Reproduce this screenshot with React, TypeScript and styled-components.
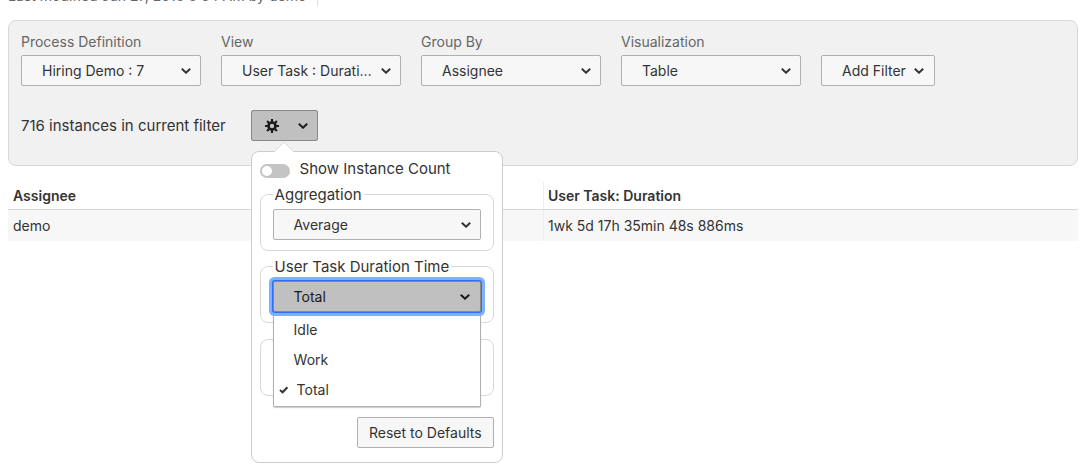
import React from "react";
import styled, { createGlobalStyle, css } from "styled-components";

const Global = createGlobalStyle`
  *, *::before, *::after { box-sizing: border-box; }
  body {
    margin: 0;
    background: #fff;
    color: #333;
    font-family: Inter, "Liberation Sans", sans-serif;
    font-size: 14px;
    line-height: 20px;
  }
  button, select, input { font: inherit; color: inherit; }
`;

const Page = styled.main`
  min-height: 100vh;
  padding: 0 8px;
`;

const ReportMeta = styled.header`
  display: flex;
  align-items: flex-end;
  height: 7px;
  margin-bottom: 13px;
  overflow: hidden;
  color: #666;
`;

const MetaText = styled.span`
  flex: none;
  margin-bottom: 1px;
  padding-right: 11px;
  border-right: 1px solid #ddd;
`;

const ControlPanel = styled.section`
  padding: 11px 12px 24px;
  background: #f1f1f1;
  border: 1px solid #d8d8d8;
  border-radius: 8px;
`;

const Controls = styled.div`
  display: flex;
  flex-wrap: wrap;
  align-items: flex-end;
  gap: 20px;
`;

const Field = styled.div`
  display: flex;
  flex-direction: column;
  gap: 3px;
  width: 180px;
`;

const FieldLabel = styled.label`
  color: #666;
`;

const control = css`
  height: 31px;
  background: #f7f7f7;
  border: 1px solid #b0b0b0;
  border-radius: 2px;
  font-size: 14px;
  line-height: 20px;
`;

const SelectBox = styled.div`
  position: relative;
  display: flex;
`;

const NativeSelect = styled.select`
  ${control}
  appearance: none;
  width: 100%;
  padding: 0 26px 0 20px;
  overflow: hidden;
  white-space: nowrap;
  text-overflow: ellipsis;
`;

const SelectArrow = styled.span`
  position: absolute;
  top: 0;
  right: 10px;
  bottom: 0;
  display: flex;
  align-items: center;
  pointer-events: none;
`;

const DropdownButton = styled.button<{ $active?: boolean }>`
  ${control}
  display: flex;
  align-items: center;
  justify-content: space-between;
  gap: 8px;
  padding: 0 10px 0 20px;
  ${(p) => p.$active && "background: #c0c0c0; border-color: #888; color: #1a1a1a;"}
`;

const SettingsButton = styled(DropdownButton)`
  gap: 19px;
  padding: 0 9px 0 13px;
`;

const OpenDropdownButton = styled(DropdownButton)`
  position: relative;
  z-index: 2;
  width: 100%;
  outline: none;
  box-shadow: 0 0 0 1px #2d70f6, 0 0 0 4px #7fb0ff;
`;

const FilterRow = styled.div`
  display: flex;
  align-items: center;
  gap: 25px;
  margin-top: 24px;
`;

const InstanceCount = styled.span`
  font-size: 15px;
`;

const PopoverAnchor = styled.div`
  position: relative;
`;

const Popover = styled.div`
  position: absolute;
  top: 41px;
  left: 0;
  z-index: 1;
  width: 252px;
  padding: 7px 8px 14px;
  background: #fff;
  border: 1px solid #ccc;
  border-radius: 8px;
  font-size: 15px;
`;

const PopoverTip = styled.svg`
  position: absolute;
  top: -11px;
  left: 21px;
`;

const SwitchLabel = styled.label`
  display: flex;
  align-items: center;
  gap: 10px;
`;

const Switch = styled.input`
  appearance: none;
  display: flex;
  align-items: center;
  width: 30px;
  height: 14px;
  margin: 4px 0 0;
  padding: 0 2px;
  background: #c4c4c4;
  border-radius: 7px;

  &::before {
    content: "";
    width: 10px;
    height: 10px;
    background: #fff;
    border-radius: 50%;
  }
`;

const Group = styled.fieldset`
  min-width: 0;
  margin: 3px 0 0;
  padding: 3px 12px 10px;
  border: 1px solid #d8d8d8;
  border-radius: 8px;
`;

const EmptyGroup = styled(Group)`
  height: 57px;
  margin-top: 16px;
`;

const Legend = styled.legend`
  padding: 2px 2px 0;
  line-height: 22px;
`;

const GroupLabel = styled.label`
  display: block;
`;

const Menu = styled.ul`
  position: absolute;
  top: 34px;
  left: 0;
  right: 0;
  z-index: 1;
  margin: 0;
  padding: 0 0 1px;
  list-style: none;
  background: #fff;
  border: 1px solid #b0b0b0;
  border-top: 0;
  border-radius: 0 0 2px 2px;
  box-shadow: 0 1px 1px #ccc;
  font-size: 14px;
`;

const MenuItem = styled.li<{ $checked?: boolean }>`
  display: flex;
  align-items: center;
  gap: 8px;
  height: 30px;
  padding-left: ${(p) => (p.$checked ? 5 : 20)}px;
`;

const PopoverActions = styled.div`
  display: flex;
  justify-content: flex-end;
  margin-top: 21px;
`;

const PlainButton = styled.button`
  ${control}
  padding: 0 11px;
`;

const ReportTable = styled.table`
  width: 100%;
  margin-top: 16px;
  border-collapse: separate;
  border-spacing: 0;
  table-layout: fixed;
`;

const cell = css`
  text-align: left;

  & + & {
    border-left: 1px solid #eee;
    padding-left: 4px;
  }
`;

const HeadCell = styled.th`
  padding: 4px 5px 3px;
  font-weight: 600;
  border-bottom: 1px solid #d8d8d8;
  ${cell}
`;

const BodyCell = styled.td`
  padding: 6px 5px 5px;
  background: #f7f7f7;
  ${cell}
`;

const Chevron = () => (
  <svg width="10" height="6" viewBox="0 0 10 6" fill="none" aria-hidden="true">
    <path d="M0.8 0.8L5 4.7L9.2 0.8" stroke="currentColor" strokeWidth="2" />
  </svg>
);

const Check = () => (
  <svg width="10" height="8" viewBox="0 0 10 8" fill="none" aria-hidden="true">
    <path d="M1 4L3.6 6.3L8.4 1.2" stroke="currentColor" strokeWidth="2" />
  </svg>
);

const Gear = () => (
  <svg width="14" height="14" viewBox="0 0 14 14" fill="none" stroke="currentColor" aria-hidden="true">
    <circle cx="7" cy="7" r="3.5" strokeWidth="2.6" />
    <path
      d="M7 0V3M7 11V14M0 7H3M11 7H14M2.1 2.1L4.2 4.2M9.8 9.8L11.9 11.9M2.1 11.9L4.2 9.8M9.8 4.2L11.9 2.1"
      strokeWidth="2.1"
    />
  </svg>
);

type SelectProps = { id: string; value: string };

const Select = ({ id, value }: SelectProps) => (
  <SelectBox>
    <NativeSelect id={id} defaultValue={value}>
      <option>{value}</option>
    </NativeSelect>
    <SelectArrow>
      <Chevron />
    </SelectArrow>
  </SelectBox>
);

const fields = [
  { id: "definition", label: "Process Definition", value: "Hiring Demo : 7" },
  { id: "view", label: "View", value: "User Task : Duration" },
  { id: "group", label: "Group By", value: "Assignee" },
  { id: "visualization", label: "Visualization", value: "Table" },
];

const durationTimes = ["Idle", "Work", "Total"];

export default function App() {
  return (
    <Page>
      <Global />
      <ReportMeta>
        <MetaText>Last modified Jun 27, 2018 8:54 AM by demo</MetaText>
      </ReportMeta>
      <ControlPanel>
        <Controls>
          {fields.map((f) => (
            <Field key={f.id}>
              <FieldLabel htmlFor={f.id}>{f.label}</FieldLabel>
              <Select id={f.id} value={f.value} />
            </Field>
          ))}
          <DropdownButton type="button" aria-haspopup="menu">
            Add Filter
            <Chevron />
          </DropdownButton>
        </Controls>
        <FilterRow>
          <InstanceCount>716 instances in current filter</InstanceCount>
          <PopoverAnchor>
            <SettingsButton type="button" $active aria-label="Settings" aria-expanded="true">
              <Gear />
              <Chevron />
            </SettingsButton>
            <Popover>
              <PopoverTip width="22" height="12" viewBox="0 0 22 12" aria-hidden="true">
                <path d="M1 11.5L11 1L21 11.5V12H1Z" fill="#fff" />
                <path d="M1 11L11 1L21 11" fill="none" stroke="#d8d8d8" />
              </PopoverTip>
              <SwitchLabel>
                <Switch type="checkbox" role="switch" />
                Show Instance Count
              </SwitchLabel>
              <Group>
                <Legend>
                  <GroupLabel htmlFor="aggregation">Aggregation</GroupLabel>
                </Legend>
                <Select id="aggregation" value="Average" />
              </Group>
              <Group>
                <Legend id="duration-time">User Task Duration Time</Legend>
                <SelectBox>
                  <OpenDropdownButton
                    type="button"
                    $active
                    aria-haspopup="listbox"
                    aria-expanded="true"
                    aria-describedby="duration-time"
                  >
                    Total
                    <Chevron />
                  </OpenDropdownButton>
                  <Menu role="listbox" aria-labelledby="duration-time">
                    {durationTimes.map((t) => (
                      <MenuItem key={t} role="option" aria-selected={t === "Total"} $checked={t === "Total"}>
                        {t === "Total" && <Check />}
                        {t}
                      </MenuItem>
                    ))}
                  </Menu>
                </SelectBox>
              </Group>
              <EmptyGroup />
              <PopoverActions>
                <PlainButton type="button">Reset to Defaults</PlainButton>
              </PopoverActions>
            </Popover>
          </PopoverAnchor>
        </FilterRow>
      </ControlPanel>
      <ReportTable>
        <thead>
          <tr>
            <HeadCell scope="col">Assignee</HeadCell>
            <HeadCell scope="col">User Task: Duration</HeadCell>
          </tr>
        </thead>
        <tbody>
          <tr>
            <BodyCell>demo</BodyCell>
            <BodyCell>1wk 5d 17h 35min 48s 886ms</BodyCell>
          </tr>
        </tbody>
      </ReportTable>
    </Page>
  );
}
